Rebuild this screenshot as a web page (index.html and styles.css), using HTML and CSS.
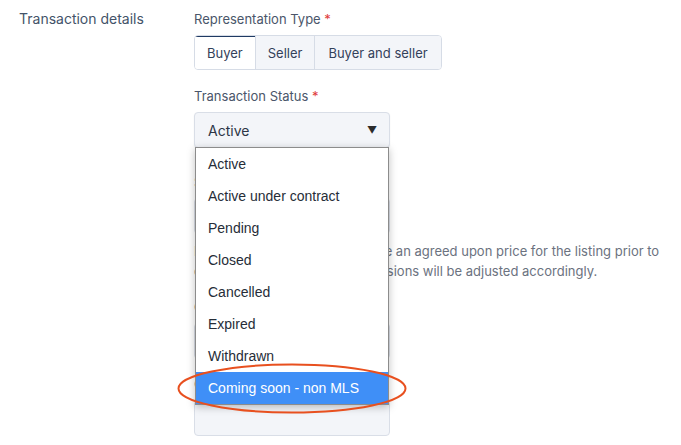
FILE: index.html
```html
<!DOCTYPE html>
<html lang="en">
<head>
    <meta charset="UTF-8">
    <meta name="viewport" content="width=device-width, initial-scale=1.0">
    <title>Transaction details</title>
    <link rel="stylesheet" href="styles.css">
</head>
<body>
    <div class="page">
        <div class="row">
            <div class="row-label">Transaction details</div>

            <div class="row-fields">
                <div class="field">
                    <div class="field-label">Representation Type <span class="req">*</span></div>
                    <div class="btn-group">
                        <button class="seg active">Buyer</button>
                        <button class="seg">Seller</button>
                        <button class="seg">Buyer and seller</button>
                    </div>
                </div>

                <div class="field select-field">
                    <div class="field-label">Transaction Status <span class="req">*</span></div>
                    <div class="select-box">
                        <span>Active</span>
                        <span class="arrow">&#9660;</span>
                    </div>
                    <ul class="options">
                        <li>Active</li>
                        <li>Active under contract</li>
                        <li>Pending</li>
                        <li>Closed</li>
                        <li>Cancelled</li>
                        <li>Expired</li>
                        <li>Withdrawn</li>
                        <li class="selected">Coming soon - non MLS</li>
                    </ul>
                </div>

                <!-- fields sitting under the open dropdown -->
                <div class="field under">
                    <div class="field-label">Sale price</div>
                    <div class="input"></div>
                    <p class="help">If both the buyer and seller have an agreed upon price for the listing prior to closing, the total listing commissions will be adjusted accordingly.</p>
                </div>

                <div class="field tight">
                    <div class="field-label">Commission</div>
                    <div class="input"></div>
                </div>

                <div class="field tight">
                    <div class="field-label">Closing date</div>
                    <div class="input"></div>
                </div>
            </div>
        </div>

        <svg class="highlight" width="232" height="53" viewBox="0 0 232 53">
            <ellipse cx="116" cy="26.5" rx="113.5" ry="24" fill="none" stroke="#e8501f" stroke-width="2"/>
        </svg>
    </div>
</body>
</html>
```

FILE: styles.css
```css
body {
    margin: 0;
    padding: 0;
    background-color: #fff;
    font-family: Inter, "Noto Sans", sans-serif;
    overflow: hidden;
}

.page {
    position: relative;
    width: 681px;
    height: 445px;
}

.row {
    display: flex;
    padding-top: 10px;
}

.row-label {
    width: 175px;
    padding-left: 19px;
    font-size: 14px;
    line-height: 18px;
    color: #435369;
}

.row-fields {
    display: flex;
    flex-direction: column;
}

.field {
    display: flex;
    flex-direction: column;
    gap: 7px;
    margin-bottom: 17px;
}

.field.under {
    margin-top: 8px;
}

.field.tight {
    margin-bottom: 16px;
}

.field-label {
    font-size: 13px;
    line-height: 18px;
    color: #4a566a;
}

.req {
    color: #e03a3a;
}

.btn-group {
    display: flex;
    align-self: flex-start;
    border: 1px solid #d6dce6;
    border-radius: 4px;
    overflow: hidden;
}

.seg {
    font-family: Inter, sans-serif;
    font-size: 13px;
    height: 33px;
    padding: 0 12px;
    margin: 0;
    background-color: #f3f5f9;
    color: #33415a;
    border: none;
    border-right: 1px solid #d6dce6;
}

.seg:last-child {
    border-right: none;
    padding: 0 13px;
}

.seg.active {
    background-color: #fff;
    box-shadow: inset 0 1px 0 #1f3a63;
}

.select-field {
    position: relative;
}

.select-box {
    display: flex;
    align-items: center;
    justify-content: space-between;
    width: 196px;
    height: 36px;
    box-sizing: border-box;
    padding: 0 12px 0 13px;
    background-color: #f3f5f9;
    border: 1px solid #d9dee7;
    border-radius: 4px;
    box-shadow: 0 1px 2px rgba(0, 0, 0, 0.06);
    font-size: 14px;
    color: #2d3646;
}

.arrow {
    font-size: 10px;
    color: #2b2b2b;
}

.options {
    position: absolute;
    top: 60px;
    left: 1px;
    z-index: 2;
    width: 192px;
    margin: 0;
    padding: 0;
    list-style: none;
    background-color: #fff;
    border: 1px solid #8c8c8c;
    box-shadow: 0 2px 8px rgba(0, 0, 0, 0.25);
    font-family: "Liberation Sans", Arial, sans-serif;
    font-size: 14px;
    color: #262d38;
}

.options li {
    height: 32px;
    line-height: 32px;
    padding-left: 12px;
}

.options li.selected {
    background-color: #3f8ff7;
    color: #fff;
}

.input {
    width: 196px;
    height: 36px;
    box-sizing: border-box;
    background-color: #f3f5f9;
    border: 1px solid #d9dee7;
    border-radius: 4px;
}

.help {
    width: 478px;
    margin: 0;
    font-size: 13px;
    line-height: 20px;
    color: #6b7280;
}

.highlight {
    position: absolute;
    left: 176px;
    top: 362px;
    z-index: 3;
}
```
